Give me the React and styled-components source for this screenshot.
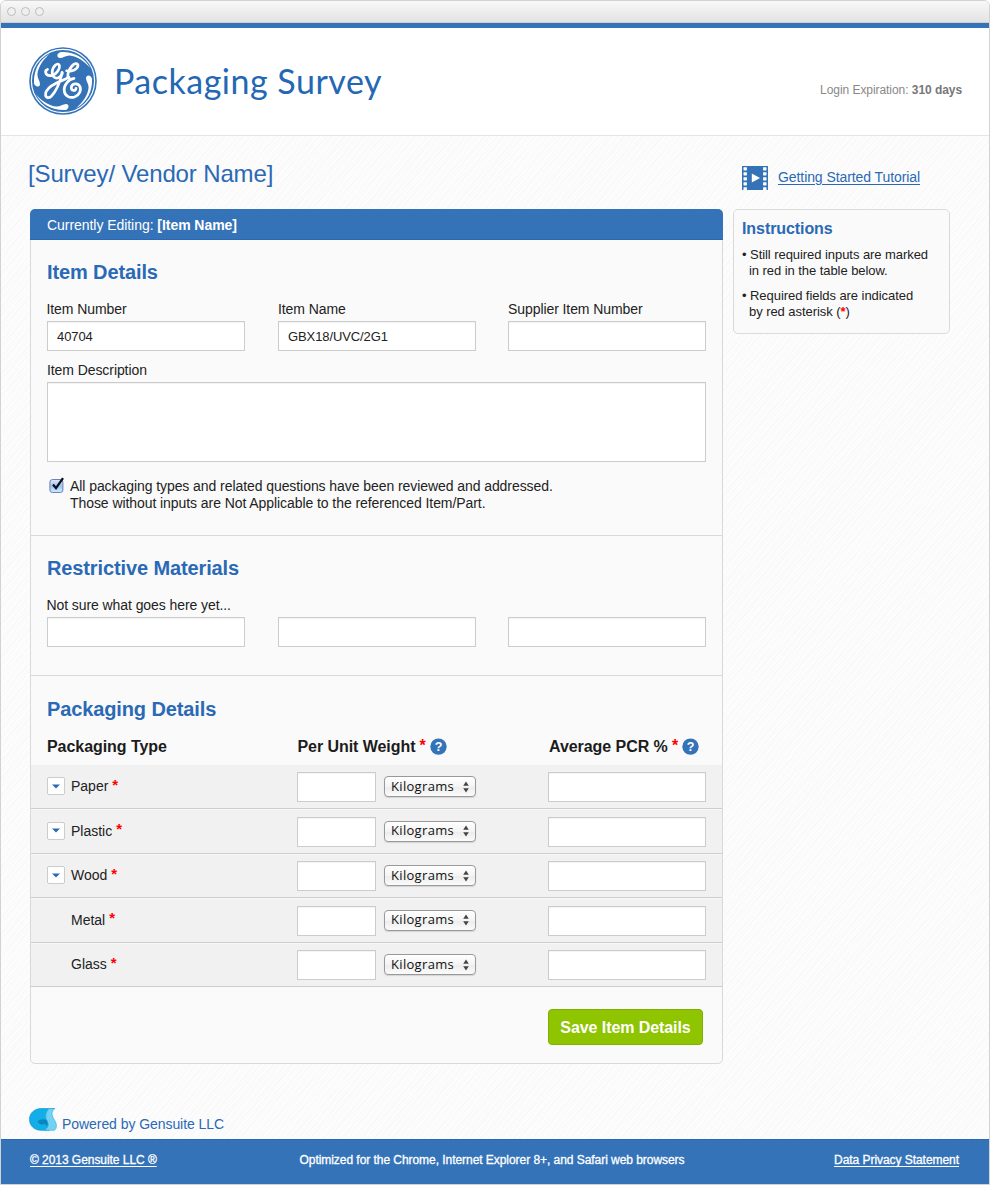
import React from "react";
import styled, { createGlobalStyle } from "styled-components";

const BLUE = "#3573b9";
const LINK = "#2a69b5";

const GlobalStyle = createGlobalStyle`
  * { box-sizing: border-box; }
  body { margin: 0; background: #fff; font-family: "Liberation Sans", Arial, sans-serif; color: #222; }
  h1, h2, h3, p, ul { margin: 0; padding: 0; font-weight: normal; }
  input, textarea, button { font-family: inherit; outline: none; }
`;

const Window = styled.div`
  width: 990px;
  height: 1185px;
  display: flex;
  flex-direction: column;
  border: 1px solid #d2d2d2;
  border-radius: 6px 6px 0 0;
  overflow: hidden;
  background: #fcfcfc;
`;

const TitleBar = styled.div`
  flex: none;
  height: 22px;
  display: flex;
  align-items: center;
  gap: 5px;
  padding: 0 0 1px 6px;
  background: linear-gradient(#f8f8f8, #e3e3e3);
  border-bottom: 1px solid #d3d0cc;
`;

const WindowDot = styled.span`
  width: 9px;
  height: 9px;
  border: 1px solid #bcbcbc;
  border-radius: 50%;
  background: #f0f0f0;
`;

const Header = styled.header`
  flex: none;
  height: 113px;
  display: flex;
  align-items: flex-start;
  border-top: 5px solid ${BLUE};
  border-bottom: 1px solid #e6e6e6;
  background: #fff;
  padding: 19px 27px 0 28px;
`;

const AppTitle = styled.h1`
  margin: 13px 0 0 17px;
  font-family: Lato, sans-serif;
  font-size: 34px;
  line-height: 42px;
  color: #2467b5;
  letter-spacing: 0.5px;
  white-space: nowrap;
`;

const Expiration = styled.p`
  margin: 35px 0 0 auto;
  font-size: 12px;
  line-height: 16px;
  letter-spacing: -0.06px;
  color: #888;
  white-space: nowrap;
  b { color: #777; }
`;

const Content = styled.main`
  flex: 1;
  display: grid;
  grid-template-columns: 693px 217px;
  grid-template-rows: 73px 855px 1fr;
  column-gap: 10px;
  padding-left: 29px;
  background:
    repeating-linear-gradient(135deg, rgba(0,0,0,.011) 0 1px, transparent 1px 3px),
    repeating-linear-gradient(128deg, rgba(0,0,0,.008) 0 2px, transparent 2px 5px),
    #fdfdfd;
`;

const VendorName = styled.h2`
  margin: 23px 0 0 -2px;
  font-size: 24px;
  line-height: 30px;
  color: ${LINK};
  letter-spacing: -0.14px;
`;

const Tutorial = styled.div`
  display: flex;
  align-items: flex-start;
  gap: 10px;
  padding: 30px 0 0 9px;
`;

const TutorialLink = styled.a`
  margin-top: 3px;
  font-size: 14px;
  line-height: 17px;
  letter-spacing: -0.08px;
  color: ${LINK};
  text-decoration: underline;
  text-underline-offset: 2px;
  white-space: nowrap;
`;

const Panel = styled.section`
  display: flex;
  flex-direction: column;
  border: 1px solid #d9d9d9;
  border-radius: 5px;
  background: #fafafa;
`;

const PanelHeader = styled.div`
  flex: none;
  height: 31px;
  margin: -1px -1px 0;
  padding: 0 17px;
  border-radius: 5px 5px 0 0;
  border-bottom: 1px solid #2868b4;
  background: ${BLUE};
  color: #fff;
  font-size: 14px;
  line-height: 32px;
  letter-spacing: -0.05px;
`;

const Section = styled.div`
  flex: none;
  height: ${(p) => p.$height}px;
  padding: ${(p) => p.$top}px 16px 0 16px;
  border-bottom: ${(p) => (p.$last ? "0" : "1px solid #d9d9d9")};
`;

const SectionTitle = styled.h2`
  font-size: 20px;
  font-weight: bold;
  line-height: 24px;
  letter-spacing: -0.12px;
  color: ${LINK};
`;

const FieldRow = styled.div`
  display: grid;
  grid-template-columns: 231px 230px 198px;
  margin-top: ${(p) => p.$top}px;
`;

const Label = styled.label`
  display: block;
  height: 20px;
  margin-left: ${(p) => p.$shift || 0}px;
  font-size: 14px;
  line-height: 17px;
  letter-spacing: -0.08px;
  white-space: nowrap;
`;

const Input = styled.input`
  display: block;
  width: ${(p) => p.$width}px;
  height: 30px;
  border: 1px solid #ccc;
  border-radius: 0;
  padding: 0 9px;
  background: #fff;
  box-shadow: inset 0 1px 1px rgba(0, 0, 0, 0.05);
  font-size: 13px;
  letter-spacing: -0.1px;
  color: #222;
`;

const TextArea = styled.textarea`
  display: block;
  width: 659px;
  height: 80px;
  border: 1px solid #ccc;
  background: #fff;
  box-shadow: inset 0 1px 1px rgba(0, 0, 0, 0.05);
  resize: none;
`;

const ReviewRow = styled.div`
  display: flex;
  gap: 5px;
  margin: 14px 0 0 2px;
`;

const ReviewText = styled.p`
  padding-top: 2px;
  font-size: 14px;
  line-height: 17px;
  letter-spacing: -0.07px;
  white-space: nowrap;
  span { display: block; }
`;

const columns = "250px 251px 158px";

const TableHead = styled.div`
  display: grid;
  grid-template-columns: ${columns};
  margin-top: 16px;
  font-size: 16px;
  font-weight: bold;
  line-height: 20px;
  letter-spacing: -0.06px;
  color: #1c1c1c;
`;

const HeadCell = styled.div`
  display: flex;
  gap: 4.2px;
  margin-left: ${(p) => p.$shift || 0}px;
  white-space: nowrap;
`;

const Star = styled.span`
  margin-top: ${(p) => -(p.$lift || 0)}px;
  color: #f00;
  font-size: ${(p) => p.$size || 16}px;
  font-weight: bold;
`;

const Row = styled.div`
  flex: none;
  height: 44.5px;
  display: grid;
  grid-template-columns: ${columns};
  padding: 6.8px 0 0 16px;
  border-bottom: 1px solid #cecece;
  border-top: 1px solid ${(p) => (p.$first ? "#f1f1f1" : "#f8f8f8")};
  background: #f1f1f1;
`;

const TypeCell = styled.div`
  display: flex;
  align-items: flex-start;
  padding-top: 5px;
`;

const Toggle = styled.button`
  width: 18px;
  height: 18px;
  display: grid;
  place-items: center;
  padding: 0;
  border: 1px solid #ccc;
  border-radius: 2px;
  background: #fff;
  visibility: ${(p) => (p.$hidden ? "hidden" : "visible")};
`;

const TypeName = styled.span`
  margin: 1px 4px 0 6px;
  font-size: 14px;
  line-height: 17px;
`;

const WeightCell = styled.div`
  display: flex;
  gap: 8px;
`;

const UnitSelect = styled.button`
  width: 92px;
  height: 21px;
  margin-top: 4px;
  display: flex;
  align-items: center;
  justify-content: space-between;
  padding: 0 6px 2px 6px;
  border: 1px solid #999;
  border-radius: 4px;
  background: linear-gradient(#fff, #f4f4f4 50%, #ececec 52%, #fbfbfb);
  box-shadow: 0 1px 1px rgba(0, 0, 0, 0.12);
  font-family: "Open Sans", sans-serif;
  font-size: 13px;
  line-height: 18px;
  letter-spacing: 0.32px;
  color: #111;
  svg { position: relative; top: 1px; }
`;

const SaveButton = styled.button`
  width: 155px;
  height: 36px;
  margin: 22px 0 0 517px;
  padding: 1px 0 0;
  border: 1px solid #80b000;
  border-radius: 4px;
  background: #8fc400;
  color: #fff;
  font-size: 16px;
  font-weight: bold;
  line-height: 33px;
  letter-spacing: -0.08px;
`;

const Instructions = styled.aside`
  height: 125px;
  padding: 8px 8px 0 8px;
  border: 1px solid #dadada;
  border-radius: 5px;
  background: #fafafa;
`;

const InstructionsTitle = styled.h3`
  font-size: 16px;
  font-weight: bold;
  line-height: 22px;
  letter-spacing: -0.08px;
  color: ${LINK};
`;

const Hint = styled.p`
  margin-top: ${(p) => p.$top}px;
  padding-left: 7px;
  text-indent: -7px;
  font-size: 13px;
  line-height: 15.5px;
  letter-spacing: -0.06px;
  white-space: nowrap;
`;

const Powered = styled.div`
  display: flex;
  align-items: flex-start;
  gap: 5px;
  margin-left: -1px;
  padding-top: 43.5px;
  font-size: 14px;
  line-height: 18px;
  letter-spacing: -0.06px;
  color: ${LINK};
  span { margin-top: 7.5px; white-space: nowrap; }
`;

const Footer = styled.footer`
  flex: none;
  height: 45px;
  display: grid;
  grid-template-columns: 269.5px 1fr auto;
  padding: 12px 30px 0 29px;
  border-top: 1px solid #2868b4;
  background: ${BLUE};
  color: #fff;
  font-size: 12px;
  line-height: 16px;
  letter-spacing: -0.05px;
  -webkit-text-stroke: 0.3px #fff;
  a { text-decoration: underline; text-underline-offset: 2px; }
`;

function Monogram() {
  return (
    <svg width="68" height="68" viewBox="0 0 68 68">
      <circle cx="34" cy="34" r="33.8" fill={BLUE} />
      <circle cx="34" cy="34" r="31.6" fill="none" stroke="#fff" strokeWidth="1.2" />
      <g fill="#fff">
        {[0, 90, 180, 270].map((a) => (
          <path
            key={a}
            transform={`rotate(${a} 34 34)`}
            d="M5 36C4.4 24.5 9.5 12.8 21 6.8C14.5 12 9 20 8.4 27.5C8.4 31.5 11 34 11 37C11 39.8 8 40.2 6.6 38.8C5.5 37.8 5.1 37 5 36Z"
          />
        ))}
      </g>
      <g fill="none" stroke="#fff" strokeLinecap="round" strokeLinejoin="round" strokeWidth="2.7">
        <path d="M18.5 22.5C15.5 23.5 16 28.5 21 28.7C27 28.5 31.5 21.5 30.2 18C28.8 15 23.5 19.2 23.2 25C23 31 28 32.5 31.2 29.5C32.3 28.5 33.5 26.5 33 25.5" />
        <path d="M33.2 25.5C31.5 33 27.5 44 22.3 49.2C19.5 51.8 16.2 50.8 16.6 46.8C17 42.5 22.5 38.5 27.5 36C32.5 33.5 37.5 32 40 30.2" />
        <path d="M37.6 23.8C42 25 48.5 22.8 49 18.7C48.8 15.7 45.3 16.3 43 19C40.5 22 38.8 25.7 38.8 29C38.8 32 42.4 33 45 31.4C39.2 32.5 34.8 38 35.2 43.3C35.6 49 40.7 51.5 45.5 50C50.5 48.3 52.7 43 50.7 39.2C48.7 35.5 42.8 36.5 42.3 40.3C42 43.8 47 44.8 47 41.3" />
      </g>
    </svg>
  );
}

function FilmIcon() {
  return (
    <svg width="26" height="24" viewBox="0 0 26 24">
      <path fill={BLUE} d="M0 0H26V24H0Z" />
      {[1.2, 6.2, 11.2, 16.2, 21.2].map((y) => (
        <g key={y} fill="#fff">
          <rect x="1.5" y={y} width="3.4" height="3.2" rx=".4" />
          <rect x="21.1" y={y} width="3.4" height="3.2" rx=".4" />
        </g>
      ))}
      <path fill="#fff" d="M9.8 7.5L18 12L9.8 16.5Z" />
    </svg>
  );
}

function CheckBoxIcon() {
  return (
    <svg width="16" height="18" viewBox="0 0 16 18">
      <defs>
        <linearGradient id="checkFill" x1="0" y1="0" x2="0" y2="1">
          <stop offset="0" stopColor="#dfeafa" />
          <stop offset=".5" stopColor="#9fc4ee" />
          <stop offset="1" stopColor="#c9efff" />
        </linearGradient>
      </defs>
      <rect x=".9" y="3.5" width="13" height="13" rx="2.5" fill="url(#checkFill)" stroke="#6c83b4" />
      <path d="M4 8.6L7 12.2L14 2.2" fill="none" stroke="#0c1020" strokeWidth="2.3" />
    </svg>
  );
}

function HelpIcon() {
  return (
    <svg width="17" height="18" viewBox="0 0 17 18">
      <circle cx="8.5" cy="9.6" r="8.2" fill={BLUE} />
      <text x="8.5" y="14" textAnchor="middle" fill="#fff" fontSize="12.5" fontWeight="bold" fontFamily="Liberation Sans">?</text>
    </svg>
  );
}

function GensuiteIcon() {
  return (
    <svg width="28" height="23" viewBox="0 0 28 23">
      <path fill="#12aeea" stroke="#0a98d2" strokeWidth=".7" d="M25.5 .6H12C5 .7 .5 5.5 .5 11.5C.6 18 5.5 22.3 12 22.3H20L22 .6Z" />
      <path fill="#72d2f2" stroke="#2fabd8" strokeWidth=".6" d="M25.7 .5C22 3.5 22.6 7 25 11.3C28.3 16 28 20 25.5 22.3H15.5C19.5 19.5 20 17 18.4 13.5C16 9.5 16 5 20 .6Z" />
      <path fill="#0b86bd" d="M8.6 13.4C11 11.2 15 10.4 18 12.6C19 15 18.8 17 17.8 18.5C17.5 16.5 15.8 15.4 14 16.4C12.2 17 9.5 15.5 8.6 13.4Z" />
    </svg>
  );
}

const items = [
  { name: "Paper", expandable: true },
  { name: "Plastic", expandable: true },
  { name: "Wood", expandable: true },
  { name: "Metal", expandable: false },
  { name: "Glass", expandable: false },
];

function PackagingRow({ item, first }) {
  return (
    <Row $first={first}>
      <TypeCell>
        <Toggle $hidden={!item.expandable}>
          <svg width="8" height="5" viewBox="0 0 8 5">
            <path fill={LINK} d="M0 .5H8L4 4.5Z" />
          </svg>
        </Toggle>
        <TypeName>{item.name}</TypeName>
        <Star $size={15} $lift={1.5}>*</Star>
      </TypeCell>
      <WeightCell>
        <Input $width={79} />
        <UnitSelect>
          Kilograms
          <svg width="6" height="12" viewBox="0 0 6 12">
            <path fill="#444" d="M3 .5L5.8 4.7H.2ZM3 11.5L5.8 7.3H.2Z" />
          </svg>
        </UnitSelect>
      </WeightCell>
      <Input $width={158} />
    </Row>
  );
}

export default function App() {
  return (
    <>
      <GlobalStyle />
      <Window>
        <TitleBar>
          <WindowDot />
          <WindowDot />
          <WindowDot />
        </TitleBar>
        <Header>
          <Monogram />
          <AppTitle>Packaging Survey</AppTitle>
          <Expiration>
            Login Expiration: <b>310 days</b>
          </Expiration>
        </Header>
        <Content>
          <VendorName>[Survey/ Vendor Name]</VendorName>
          <Tutorial>
            <FilmIcon />
            <TutorialLink>Getting Started Tutorial</TutorialLink>
          </Tutorial>
          <Panel>
            <PanelHeader>
              Currently Editing: <b>[Item Name]</b>
            </PanelHeader>
            <Section $height={296} $top={20}>
              <SectionTitle>Item Details</SectionTitle>
              <FieldRow $top={17}>
                <div>
                  <Label $shift={-0.5}>Item Number</Label>
                  <Input $width={198} defaultValue="40704" />
                </div>
                <div>
                  <Label>Item Name</Label>
                  <Input $width={198} defaultValue="GBX18/UVC/2G1" />
                </div>
                <div>
                  <Label>Supplier Item Number</Label>
                  <Input $width={198} />
                </div>
              </FieldRow>
              <FieldRow $top={11}>
                <div>
                  <Label>Item Description</Label>
                  <TextArea />
                </div>
              </FieldRow>
              <ReviewRow>
                <CheckBoxIcon />
                <ReviewText>
                  <span>All packaging types and related questions have been reviewed and addressed.</span>
                  <span>Those without inputs are Not Applicable to the referenced Item/Part.</span>
                </ReviewText>
              </ReviewRow>
            </Section>
            <Section $height={140} $top={20}>
              <SectionTitle>Restrictive Materials</SectionTitle>
              <FieldRow $top={17}>
                <div>
                  <Label $shift={-0.5}>Not sure what goes here yet...</Label>
                  <Input $width={198} />
                </div>
                <div>
                  <Label />
                  <Input $width={198} />
                </div>
                <div>
                  <Label />
                  <Input $width={198} />
                </div>
              </FieldRow>
            </Section>
            <Section $height={88.5} $top={21} $last>
              <SectionTitle>Packaging Details</SectionTitle>
              <TableHead>
                <HeadCell>Packaging Type</HeadCell>
                <HeadCell $shift={0.5}>
                  Per Unit Weight <Star $lift={1}>*</Star> <HelpIcon />
                </HeadCell>
                <HeadCell $shift={1}>
                  Average PCR % <Star $lift={1}>*</Star> <HelpIcon />
                </HeadCell>
              </TableHead>
            </Section>
            {items.map((item, i) => (
              <PackagingRow key={item.name} item={item} first={i === 0} />
            ))}
            <SaveButton>Save Item Details</SaveButton>
          </Panel>
          <Instructions>
            <InstructionsTitle>Instructions</InstructionsTitle>
            <Hint $top={7}>
              • Still required inputs are marked
              <br />
              in red in the table below.
            </Hint>
            <Hint $top={10}>
              • Required fields are indicated
              <br />
              by red asterisk (<Star $size={13}>*</Star>)
            </Hint>
          </Instructions>
          <Powered>
            <GensuiteIcon />
            <span>Powered by Gensuite LLC</span>
          </Powered>
        </Content>
        <Footer>
          <div><a>© 2013 Gensuite LLC ®</a></div>
          <div>Optimized for the Chrome, Internet Explorer 8+, and Safari web browsers</div>
          <a>Data Privacy Statement</a>
        </Footer>
      </Window>
    </>
  );
}
